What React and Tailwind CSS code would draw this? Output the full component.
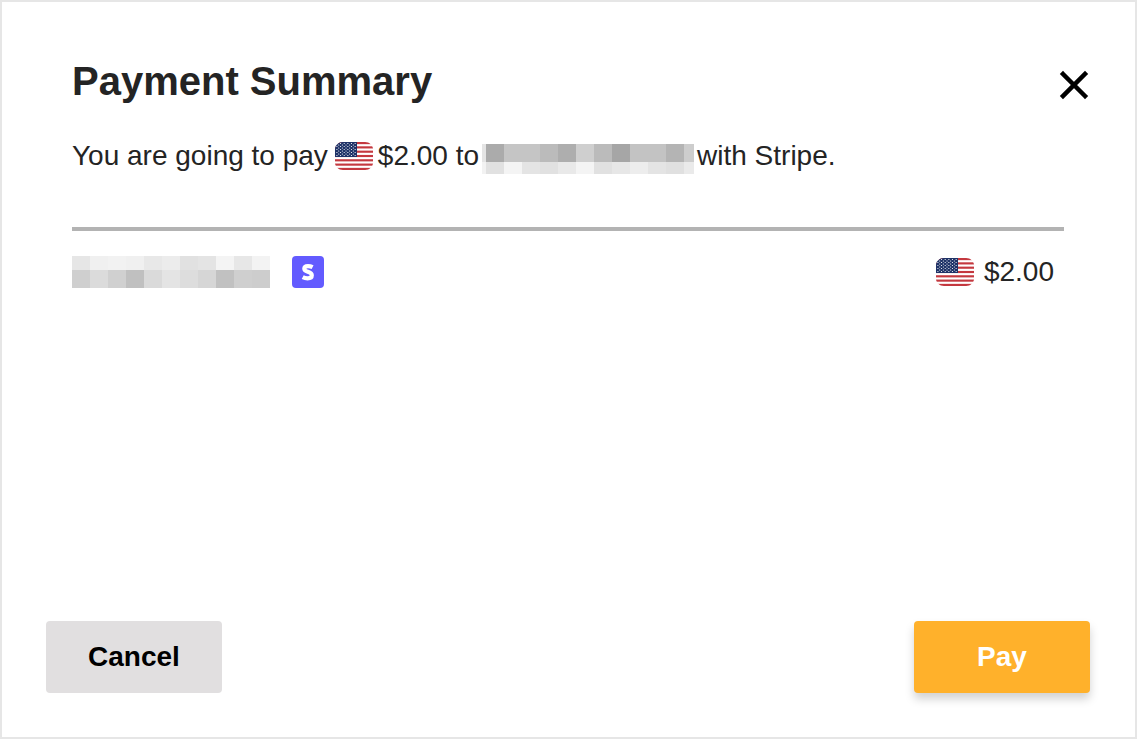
import React from "react";

// Censored names, one colour per mosaic cell
const receiverMosaic = [
  ["#e4e4e4", "#ababab", "#c5c5c5", "#c5c5c5", "#bbbbbb", "#aeaeae", "#cfcfcf", "#bbbbbb", "#a6a6a6", "#c3c3c3", "#c3c3c3", "#b4b4b4", "#cdcdcd"],
  ["#f2f2f2", "#e1e1e1", "#f4f4f4", "#e4e4e4", "#e1e1e1", "#e9e9e9", "#f4f4f4", "#e1e1e1", "#e7e7e7", "#ededed", "#e4e4e4", "#e0e0e0", "#eaeaea"],
];

const payeeMosaic = [
  ["#e6e6e6", "#f0f0f0", "#f2f2f2", "#f0f0f0", "#e8e8e8", "#ececec", "#e1e1e1", "#e4e4e4", "#f4f4f4", "#e7e7e7", "#f3f3f3"],
  ["#cfcfcf", "#dbdbdb", "#d0d0d0", "#c0c0c0", "#dadada", "#e4e4e4", "#dddddd", "#d6d6d6", "#c1c1c1", "#cfcfcf", "#cdcdcd"],
];

// "start" is the width of the first column, "top" the height of the first row
const Mosaic = ({ rows, start, top, width, height, className }) => (
  <svg
    width={width}
    height={height}
    className={`shrink-0 ${className || ""}`}
    shapeRendering="crispEdges"
    aria-hidden="true"
  >
    {rows.map((row, r) =>
      row.map((fill, c) => (
        <rect
          key={`${r}-${c}`}
          x={c === 0 ? 0 : start + (c - 1) * 18}
          y={r === 0 ? 0 : top}
          width={c === 0 ? start : 18}
          height={r === 0 ? top : height - top}
          fill={fill}
        />
      ))
    )}
  </svg>
);

const UsFlag = ({ id, className }) => (
  <svg
    width="38"
    height="28"
    viewBox="0 0 38 28"
    className={`shrink-0 ${className || ""}`}
    aria-hidden="true"
  >
    <clipPath id={id}>
      <path d="M8 0H30C34.5 0 38 3.5 38 7V21C38 24.5 34.5 28 30 28H8C3.5 28 0 24.5 0 21V7C0 3.5 3.5 0 8 0Z" />
    </clipPath>
    <g clipPath={`url(#${id})`}>
      <rect width="38" height="28" fill="#ffffff" />
      {[0, 1, 2, 3, 4, 5, 6].map((i) => (
        <rect key={i} y={i * 4.31} width="38" height="2.15" fill="#c4383f" />
      ))}
      <rect width="22" height="15" fill="#1f3368" />
      {[0, 1, 2, 3, 4, 5, 6, 7, 8].map((r) =>
        (r % 2 === 0 ? [0, 1, 2, 3, 4, 5] : [0, 1, 2, 3, 4]).map((c) => (
          <circle
            key={`${r}-${c}`}
            cx={1.9 + c * 3.65 + (r % 2) * 1.82}
            cy={1.5 + r * 1.5}
            r="0.6"
            fill="#ffffff"
          />
        ))
      )}
    </g>
  </svg>
);

const StripeLogo = () => (
  <svg width="32" height="32" viewBox="0 0 32 32" fill="none" role="img" aria-label="Stripe">
    <rect width="32" height="32" rx="4" fill="#635bff" />
    <path
      d="M20.6 11.2C19.2 10.5 17.6 10.1 16 10.1C13.6 10.1 12.3 11.2 12.3 12.7C12.3 16.4 19.8 15 19.8 19.2C19.8 21.200 18 22.3 15.6 22.3C14 22.3 12.2 21.900 10.700 21.1"
      stroke="#ffffff"
      strokeWidth="4.2"
    />
  </svg>
);

const CloseIcon = () => (
  <svg width="48" height="48" viewBox="0 0 48 48" fill="none" aria-hidden="true">
    <path
      d="M13 13L35 35M35 13L13 35"
      stroke="currentColor"
      strokeWidth="4.5"
      strokeLinecap="square"
    />
  </svg>
);

const App = () => {
  return (
    <div className="flex flex-col min-h-screen bg-white border-2 border-[#e6e6e6] font-['Liberation_Sans',Arial,sans-serif] text-[28px] leading-8 text-[#242424]">
      {/* Header */}
      <header className="flex items-start justify-between pt-[59px] pl-[70px] pr-[37px]">
        <h1 className="text-[40px] leading-10 font-bold">Payment Summary</h1>
        <button type="button" aria-label="Close" className="text-black">
          <CloseIcon />
        </button>
      </header>

      <main className="flex-1 pt-[31px] pl-[70px] pr-[71px]">
        <p className="flex flex-wrap items-center">
          <span>You are going to pay</span>
          <UsFlag id="flag-text" className="ml-[7px] mr-[5px]" />
          <span>$2.00 to</span>
          <Mosaic
            rows={receiverMosaic}
            start={4}
            top={18}
            width={212}
            height={30}
            className="mx-[3px] mt-[3px] -mb-[3px]"
          />
          <span>with Stripe.</span>
        </p>

        {/* Payments */}
        <ul className="mt-[55px] pt-[25px] border-t-4 border-[#b3b3b3]">
          <li className="flex items-center justify-between pr-2.5">
            <div className="flex items-center gap-[22px]">
              <Mosaic rows={payeeMosaic} start={18} top={14} width={198} height={32} />
              <StripeLogo />
            </div>
            <div className="flex items-center gap-2.5">
              <UsFlag id="flag-row" />
              <span>$2.00</span>
            </div>
          </li>
        </ul>
      </main>

      {/* Actions */}
      <footer className="flex justify-between pl-11 pr-[45px] pb-11">
        <button
          type="button"
          className="w-44 h-[72px] rounded bg-[#e1dfe0] font-bold text-black"
        >
          Cancel
        </button>
        <button
          type="button"
          className="w-44 h-[72px] rounded bg-[#ffb12b] font-bold text-white shadow-[0_6px_10px_rgba(0,0,0,0.18)]"
        >
          Pay
        </button>
      </footer>
    </div>
  );
};

export default App;
